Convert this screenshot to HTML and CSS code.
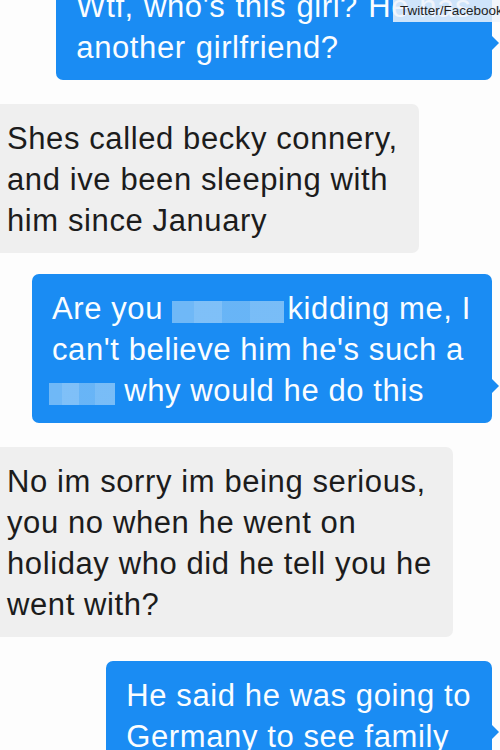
FILE: index.html
```html
<!DOCTYPE html>
<html lang="en">
<head>
<meta charset="utf-8">
<title>Messages</title>
<link rel="stylesheet" href="styles.css">
</head>
<body>
<div class="credit">Twitter/Facebook</div>
<div class="thread">
  <div class="bubble sent b1">Wtf, who's this girl? He has<br>another girlfriend?</div>
  <div class="bubble recv b2">Shes called becky connery,<br>and ive been sleeping with<br>him since January</div>
  <div class="bubble sent b3">Are you <span class="redact r1"></span> kidding me, I<br>can't believe him he's such a<br><span class="redact r2"></span> why would he do this</div>
  <div class="bubble recv b4">No im sorry im being serious,<br>you no when he went on<br>holiday who did he tell you he<br>went with?</div>
  <div class="bubble sent b5">He said he was going to<br>Germany to see family</div>
</div>
</body>
</html>
```
FILE: styles.css
```css
html, body {
  margin: 0;
  padding: 0;
}
body {
  width: 500px;
  height: 750px;
  overflow: hidden;
  background: #fdfdfd;
  font-family: "Liberation Sans", Arial, sans-serif;
  position: relative;
}
.credit {
  position: absolute;
  top: 0;
  left: 393px;
  width: 107px;
  height: 22px;
  overflow: hidden;
  white-space: nowrap;
  background: rgba(238, 243, 250, 0.85);
  color: #222;
  font-size: 13.5px;
  line-height: 22px;
  padding-left: 7px;
  box-sizing: border-box;
  z-index: 2;
}
.thread {
  display: flex;
  flex-direction: column;
  gap: 24px;
  margin-top: -28px;
}
.bubble {
  position: relative;
  width: fit-content;
  font-size: 31px;
  letter-spacing: 0.6px;
  line-height: 41px;
  padding: 14px 21px 12px 20px;
  border-radius: 7px;
  white-space: nowrap;
}
.b1 {
  word-spacing: 1px;
}
.b3 {
  margin-top: -3px;
}
.sent {
  align-self: flex-end;
  margin-right: 8px;
  background: #1a8cf3;
  color: #fafdff;
}
.sent::after {
  content: "";
  position: absolute;
  right: -7px;
  bottom: 30px;
  border-left: 7px solid #1a8cf3;
  border-top: 7px solid transparent;
  border-bottom: 7px solid transparent;
}
.recv {
  align-self: flex-start;
  margin-left: -13px;
  background: #efefef;
  color: #1c1c1c;
}
.redact {
  display: inline-block;
  vertical-align: -4px;
  background:
    linear-gradient(90deg, rgba(255,255,255,0.1) 0 20%, rgba(255,255,255,0.2) 20% 45%, rgba(255,255,255,0.06) 45% 70%, rgba(255,255,255,0.16) 70%),
    #5fb0f6;
}
.r1 {
  width: 112px;
  height: 22px;
  margin-left: 0;
  margin-right: -6px;
}
.r2 {
  width: 66px;
  height: 22px;
  margin-left: -3px;
}
```
